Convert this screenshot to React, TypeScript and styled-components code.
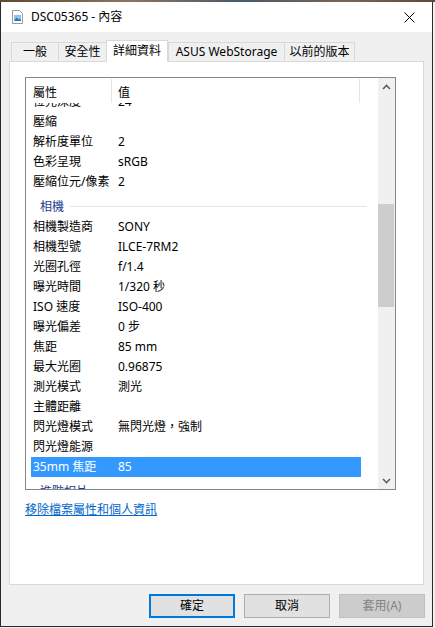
import React from "react";
import styled, { createGlobalStyle } from "styled-components";

const Global = createGlobalStyle`
  html, body { margin: 0; padding: 0; background: #f0f0f0; }
  body { font-family: "Noto Sans", "Noto Sans CJK TC", sans-serif; font-size: 12px; color: #000; }
`;

const Backdrop = styled.div`
  width: 435px;
  height: 628px;
  background: linear-gradient(90deg, #5d4a38 0%, #8a7560 30%, #4b5a6a 55%, #7a6552 80%, #5d4a38 100%);
  background-size: 100% 2px;
  background-repeat: no-repeat;
  padding-top: 2px;
  box-sizing: border-box;
`;

const Window = styled.div`
  width: 433px;
  height: 625px;
  box-sizing: border-box;
  border: 1px solid #2b2b2b;
  border-top: none;
  display: flex;
  flex-direction: column;
  background: #f0f0f0;
`;

const TitleBar = styled.div`
  height: 30px;
  background: #fff;
  display: flex;
  align-items: center;
  padding-left: 11px;
  flex-shrink: 0;
`;

const TitleText = styled.div`
  margin-left: 8px;
  font-size: 12px;
  line-height: 16px;
  flex: 1;
`;

const CloseBox = styled.div`
  width: 46px;
  height: 30px;
  display: flex;
  align-items: center;
  justify-content: center;
`;

const Content = styled.div`
  flex: 1;
  display: flex;
  flex-direction: column;
  padding: 8px 8px 0 8px;
  min-height: 0;
`;

const TabRow = styled.div`
  height: 21px;
  display: flex;
  align-items: flex-end;
  padding-left: 2px;
  flex-shrink: 0;
`;

const Tab = styled.div<{ $w: number; $active?: boolean; $last?: boolean }>`
  width: ${(p) => p.$w}px;
  box-sizing: border-box;
  height: ${(p) => (p.$active ? 22 : 19)}px;
  margin-bottom: ${(p) => (p.$active ? -1 : 0)}px;
  position: relative;
  z-index: ${(p) => (p.$active ? 2 : 0)};
  background: ${(p) => (p.$active ? "#fff" : "#f0f0f0")};
  border-top: 1px solid #d9d9d9;
  border-left: 1px solid #d9d9d9;
  border-right: ${(p) => (p.$active || p.$last ? "1px solid #d9d9d9" : "none")};
  display: flex;
  align-items: ${(p) => (p.$active ? "flex-start" : "center")};
  padding-top: ${(p) => (p.$active ? 2 : 0)}px;
  justify-content: center;
  font-size: 12px;
  line-height: 16px;
  white-space: nowrap;
`;

const Panel = styled.div`
  flex: 1;
  background: #fff;
  border: 1px solid #d9d9d9;
  padding: 15px 15px 0 15px;
  display: flex;
  flex-direction: column;
  position: relative;
  z-index: 1;
`;

const ListView = styled.div`
  width: 371px;
  height: 413px;
  box-sizing: border-box;
  border: 1px solid #828790;
  display: flex;
  background: #fff;
`;

const ListBody = styled.div`
  flex: 1;
  display: flex;
  flex-direction: column;
  min-width: 0;
`;

const Header = styled.div`
  height: 25px;
  display: flex;
  flex-shrink: 0;
  position: relative;
  z-index: 1;
  background: #fff;
`;

const HeaderCell = styled.div<{ $w: number; $pl: number }>`
  width: ${(p) => p.$w}px;
  box-sizing: border-box;
  padding-left: ${(p) => p.$pl}px;
  padding-top: 3px;
  border-right: 1px solid #e5e5e5;
  margin-top: 1px;
  display: flex;
  align-items: center;
  font-size: 12px;
  line-height: 16px;
`;

const Rows = styled.div`
  flex: 1;
  overflow: hidden;
`;

const RowsInner = styled.div`
  margin-top: -11px;
`;

const Row = styled.div<{ $sel?: boolean }>`
  height: 20px;
  width: 330px;
  margin-left: 5px;
  display: flex;
  align-items: center;
  background: ${(p) => (p.$sel ? "#3399ff" : "transparent")};
  color: ${(p) => (p.$sel ? "#fff" : "#000")};
  font-size: 12px;
  line-height: 16px;
  white-space: nowrap;
`;

const PropCell = styled.div`
  width: 87px;
  box-sizing: border-box;
  padding-left: 2px;
  overflow: hidden;
`;

const ValCell = styled.div`
  flex: 1;
`;

const Group = styled.div`
  height: 25px;
  width: 336px;
  margin-left: 5px;
  box-sizing: border-box;
  padding-left: 9px;
  padding-top: 4px;
  display: flex;
  align-items: center;
  color: #1e3c8c;
  font-size: 12px;
  line-height: 16px;
`;

const GroupLine = styled.div`
  flex: 1;
  height: 1px;
  background: #e2e5ea;
  margin-left: 6px;
`;

const ScrollBar = styled.div`
  width: 17px;
  background: #f0f0f0;
  display: flex;
  flex-direction: column;
  align-items: center;
`;

const ArrowBox = styled.div`
  width: 17px;
  height: 17px;
  display: flex;
  align-items: center;
  justify-content: center;
  flex-shrink: 0;
`;

const Track = styled.div`
  flex: 1;
  width: 100%;
  display: flex;
  flex-direction: column;
`;

const Thumb = styled.div`
  margin: 109px 1px 0 0;
  height: 103px;
  background: #cdcdcd;
`;

const Link = styled.a`
  margin-top: 12px;
  color: #0066cc;
  text-decoration: underline;
  font-size: 12px;
  line-height: 16px;
  align-self: flex-start;
  cursor: pointer;
`;

const Footer = styled.div`
  height: 41px;
  flex-shrink: 0;
  display: flex;
  justify-content: flex-end;
  align-items: flex-start;
  gap: 9px;
  padding-top: 9px;
  box-sizing: border-box;
  margin-right: -1px;
`;

const Button = styled.div<{ $primary?: boolean; $disabled?: boolean }>`
  width: 86px;
  height: 24px;
  box-sizing: border-box;
  display: flex;
  align-items: center;
  justify-content: center;
  font-size: 12px;
  line-height: 16px;
  background: ${(p) => (p.$disabled ? "#cccccc" : "#e1e1e1")};
  border: ${(p) => (p.$primary ? "2px solid #0078d7" : p.$disabled ? "1px solid #bfbfbf" : "1px solid #adadad")};
  color: ${(p) => (p.$disabled ? "#838383" : "#000")};
`;

type Item = { k: string; v?: string; group?: boolean; sel?: boolean };

const items: Item[] = [
  { k: "位元深度", v: "24" },
  { k: "壓縮" },
  { k: "解析度單位", v: "2" },
  { k: "色彩呈現", v: "sRGB" },
  { k: "壓縮位元/像素", v: "2" },
  { k: "相機", group: true },
  { k: "相機製造商", v: "SONY" },
  { k: "相機型號", v: "ILCE-7RM2" },
  { k: "光圈孔徑", v: "f/1.4" },
  { k: "曝光時間", v: "1/320 秒" },
  { k: "ISO 速度", v: "ISO-400" },
  { k: "曝光偏差", v: "0 步" },
  { k: "焦距", v: "85 mm" },
  { k: "最大光圈", v: "0.96875" },
  { k: "測光模式", v: "測光" },
  { k: "主體距離" },
  { k: "閃光燈模式", v: "無閃光燈，強制" },
  { k: "閃光燈能源" },
  { k: "35mm 焦距", v: "85", sel: true },
  { k: "進階相片", group: true },
  { k: "鏡頭製造商" },
];

const FileIcon = () => (
  <svg width="11" height="14" viewBox="0 0 11 14">
    <path d="M0.5 0.5 H7.5 L10.5 3.5 V13.5 H0.5 Z" fill="#fff" stroke="#9a9a9a" />
    <rect x="2" y="5" width="7" height="6" fill="#8fc3ec" />
    <path d="M2 11 L4.5 7.5 L6.5 9.5 L7.5 8.5 L9 10 V11 Z" fill="#2a6fb8" />
  </svg>
);

const CloseIcon = () => (
  <svg width="11" height="11" viewBox="0 0 11 11">
    <path d="M0.5 0.5 L10.5 10.5 M10.5 0.5 L0.5 10.5" stroke="#000" strokeWidth="1" />
  </svg>
);

const Chevron = ({ up }: { up?: boolean }) => (
  <svg width="9" height="6" viewBox="0 0 9 6">
    <polyline
      points={up ? "1,5 4.5,1.5 8,5" : "1,1 4.5,4.5 8,1"}
      fill="none"
      stroke="#606060"
      strokeWidth="1.6"
    />
  </svg>
);

export default function App() {
  return (
    <>
      <Global />
      <Backdrop>
        <Window>
          <TitleBar>
            <FileIcon />
            <TitleText>DSC05365 - 內容</TitleText>
            <CloseBox>
              <CloseIcon />
            </CloseBox>
          </TitleBar>
          <Content>
            <TabRow>
              <Tab $w={47}>一般</Tab>
              <Tab $w={48}>安全性</Tab>
              <Tab $w={62} $active>
                詳細資料
              </Tab>
              <Tab $w={116}>ASUS WebStorage</Tab>
              <Tab $w={71} $last>
                以前的版本
              </Tab>
            </TabRow>
            <Panel>
              <ListView>
                <ListBody>
                  <Header>
                    <HeaderCell $w={86} $pl={7}>
                      屬性
                    </HeaderCell>
                    <HeaderCell $w={248} $pl={6}>
                      值
                    </HeaderCell>
                  </Header>
                  <Rows>
                    <RowsInner>
                      {items.map((it, i) =>
                        it.group ? (
                          <Group key={i}>
                            {it.k}
                            <GroupLine />
                          </Group>
                        ) : (
                          <Row key={i} $sel={it.sel}>
                            <PropCell>{it.k}</PropCell>
                            <ValCell>{it.v ?? ""}</ValCell>
                          </Row>
                        )
                      )}
                    </RowsInner>
                  </Rows>
                </ListBody>
                <ScrollBar>
                  <ArrowBox>
                    <Chevron up />
                  </ArrowBox>
                  <Track>
                    <Thumb />
                  </Track>
                  <ArrowBox>
                    <Chevron />
                  </ArrowBox>
                </ScrollBar>
              </ListView>
              <Link>移除檔案屬性和個人資訊</Link>
            </Panel>
            <Footer>
              <Button $primary>確定</Button>
              <Button>取消</Button>
              <Button $disabled>套用(A)</Button>
            </Footer>
          </Content>
        </Window>
      </Backdrop>
    </>
  );
}
